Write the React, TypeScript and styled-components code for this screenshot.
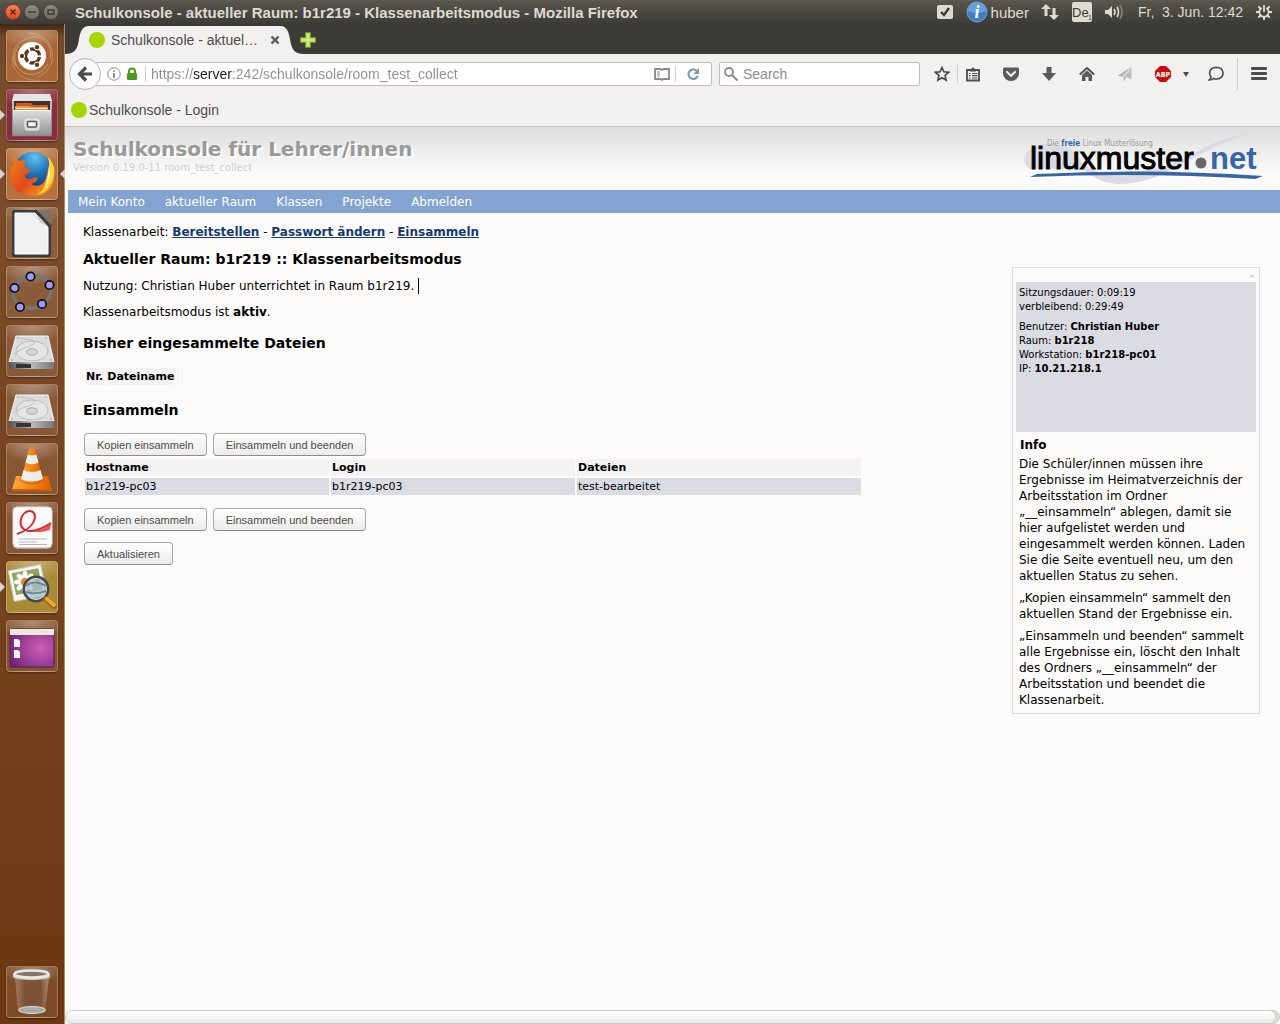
import React from "react";
import styled, { createGlobalStyle } from "styled-components";

const ui = `"Liberation Sans", Arial, sans-serif`;
const web = `"DejaVu Sans", Verdana, sans-serif`;

const Global = createGlobalStyle`
  * { box-sizing: border-box; }
  body { margin: 0; background: #fcfbfa; font-family: ${web}; font-size: 12px; color: #000; }
  h1, h2, p, ul { margin: 0; padding: 0; }
  button, input { font: inherit; }
  svg { display: block; flex: none; }
`;

/* ---------- desktop ---------- */

const Desktop = styled.div`
  min-height: 100vh;
  display: flex;
  flex-direction: column;
`;

const TopPanel = styled.header`
  height: 24px;
  flex: none;
  display: flex;
  align-items: center;
  padding: 0 8px 0 5px;
  background: linear-gradient(#5f5d50, #57544b 2px, #3d3b37);
  color: #dfdbd2;
  font-family: ${ui};
  font-size: 15px;
`;

const WindowButtons = styled.div`
  display: flex;
  gap: 3px;
  width: 70px;
`;

const WindowButton = styled.button<{ $close?: boolean }>`
  width: 16px;
  height: 16px;
  padding: 0;
  display: grid;
  place-items: center;
  border-radius: 50%;
  border: 1px solid ${(p) => (p.$close ? "#9a3b1d" : "#4a4842")};
  background: ${(p) =>
    p.$close ? "linear-gradient(#f5875f, #e2491b)" : "linear-gradient(#8b887e, #6f6c64)"};
`;

const WindowTitle = styled.div`
  flex: 1;
  font-weight: bold;
  white-space: nowrap;
`;

const Indicators = styled.div`
  display: flex;
  align-items: center;
`;

const Indicator = styled.div<{ $gap: number }>`
  display: flex;
  align-items: center;
  gap: 3px;
  margin-left: ${(p) => p.$gap}px;
  white-space: pre;
`;

const Clock = styled(Indicator)`
  font-size: 14px;
`;

const Workspace = styled.div`
  flex: 1;
  display: flex;
`;

const Launcher = styled.nav`
  width: 65px;
  flex: none;
  display: flex;
  flex-direction: column;
  gap: 7px;
  padding: 6px 7px 6px 6px;
  border-right: 1px solid #b08a6c;
  background: linear-gradient(#3c2716, #74492a 12px, #7c4d2b 120px, #774420 50%, #6a3711);
`;

const Tile = styled.button<{ $tint?: string; $last?: boolean }>`
  position: relative;
  width: 52px;
  height: 52px;
  padding: 0;
  margin-top: ${(p) => (p.$last ? "auto" : "0")};
  border: 1px solid rgba(255, 225, 200, 0.3);
  border-radius: 4px;
  display: grid;
  place-items: center;
  background:
    radial-gradient(ellipse 34px 18px at 50% 0, rgba(255, 255, 255, 0.35), transparent),
    ${(p) => p.$tint || "rgba(255, 220, 190, 0.12)"};
  box-shadow: 0 1px 2px rgba(0, 0, 0, 0.4);
`;

const RunningMark = styled.span<{ $right?: boolean }>`
  position: absolute;
  top: 20px;
  ${(p) => (p.$right ? "right: -8px;" : "left: -7px;")}
  border: 5px solid transparent;
  ${(p) =>
    p.$right
      ? "border-left-width: 0; border-right-color: #d8d5d0;"
      : "border-right-width: 0; border-left-color: #d8d5d0;"}
`;

/* ---------- browser ---------- */

const Browser = styled.div`
  flex: 1;
  min-width: 0;
  display: flex;
  flex-direction: column;
`;

const TabStrip = styled.div`
  height: 30px;
  display: flex;
  align-items: flex-end;
  background: #3c3b37;
  font-family: ${ui};
`;

const Tab = styled.div`
  height: 28px;
  width: 191px;
  display: flex;
  align-items: center;
  gap: 6px;
  background: #f2f1f0;
  color: #4c4c4c;
  font-size: 14px;
  white-space: nowrap;
`;

const TabLabel = styled.span`
  flex: 1;
`;

const PlainButton = styled.button`
  padding: 0;
  border: 0;
  background: none;
  display: grid;
  place-items: center;
`;

const NewTab = styled(PlainButton)`
  height: 28px;
  margin-left: -4px;
`;

const Dot = styled.span`
  width: 16px;
  height: 16px;
  flex: none;
  border-radius: 50%;
  background: #a5d400;
`;

const Toolbar = styled.div`
  height: 40px;
  display: flex;
  align-items: center;
  padding: 0 6px 0 4px;
  background: #f2f1f0;
  font-family: ${ui};
  font-size: 14px;
`;

const BackButton = styled(PlainButton)`
  width: 32px;
  height: 32px;
  flex: none;
  border: 1px solid #b8b6b2;
  border-radius: 50%;
  background: #fbfafa;
  z-index: 1;
`;

const Field = styled.div`
  height: 24px;
  display: flex;
  align-items: center;
  gap: 5px;
  border: 1px solid #bfbdb9;
  border-radius: 2px;
  background: #fff;
`;

const AddressField = styled(Field)`
  flex: 1;
  min-width: 0;
  margin-left: -6px;
  margin-right: 7px;
  padding: 0 6px 0 11px;
`;

const SearchField = styled(Field)`
  width: 201px;
  margin-right: 7px;
  padding-left: 4px;
`;

const TextInput = styled.input`
  flex: 1;
  min-width: 0;
  height: 20px;
  padding: 0;
  border: 0;
  outline: 0;
  background: none;
  color: #8c8c8c;
  &::placeholder { color: #8c8c8c; opacity: 1; }
`;

const AddressInput = styled(TextInput)`
  background: linear-gradient(90deg, #8f8f8f 42px, #1c1c1c 42px, #1c1c1c 81px, #8f8f8f 81px);
  background-clip: text;
  -webkit-background-clip: text;
  -webkit-text-fill-color: transparent;
`;

const Divider = styled.span<{ $h: number }>`
  width: 1px;
  height: ${(p) => p.$h}px;
  flex: none;
  background: #cfcdca;
`;

const Tools = styled.div<{ $gap: number }>`
  display: flex;
  align-items: center;
  gap: ${(p) => p.$gap}px;
`;

const ToolButton = styled(PlainButton)<{ $narrow?: boolean }>`
  width: ${(p) => (p.$narrow ? 15 : 30)}px;
  height: 30px;
`;

const BookmarkBar = styled.div`
  height: 33px;
  display: flex;
  align-items: center;
  padding-left: 6px;
  border-bottom: 1px solid #c6c3bf;
  background: #f2f1f0;
`;

const Bookmark = styled.a`
  display: flex;
  align-items: center;
  gap: 2px;
  color: #4c4c4c;
  font-family: ${ui};
  font-size: 14px;
  text-decoration: none;
`;

const ScrollTrack = styled.div`
  height: 14px;
  padding-right: 4px;
  border: 1px solid #cfcbc8;
  border-radius: 7px;
  background: #dddbd8;
`;

const ScrollThumb = styled.div`
  height: 12px;
  border-radius: 6px;
  background: linear-gradient(#fff, #ecebea);
`;

/* ---------- web page ---------- */

const Page = styled.div`
  flex: 1;
  padding-left: 3px;
  background: linear-gradient(#dcdddc, #fcfbfa 46px);
`;

const PageHeader = styled.div`
  height: 63px;
  display: flex;
  justify-content: space-between;
  padding: 10px 17px 0 5px;
`;

const SiteTitle = styled.h1`
  font-size: 20px;
  line-height: 24px;
  color: #999;
  text-shadow: 2px 2px 1px #fff;
`;

const Version = styled.p`
  font-size: 10px;
  line-height: 14px;
  color: #d0d0d0;
`;

const Logo = styled.svg`
  margin-top: -8px;
`;

const Menu = styled.ul`
  height: 23px;
  display: flex;
  align-items: center;
  gap: 20px;
  padding-left: 10px;
  list-style: none;
  background: #83a4d1;
`;

const MenuLink = styled.a`
  color: #fff;
  text-decoration: none;
`;

const Columns = styled.div`
  display: flex;
  justify-content: space-between;
  gap: 24px;
  padding: 0 20px 0 15px;
`;

const Main = styled.main`
  flex: 1;
  max-width: 780px;
  padding-top: 11px;
`;

const Line = styled.p`
  line-height: 16px;
  margin-bottom: 10px;
`;

const Caret = styled.span`
  display: inline-block;
  width: 1px;
  height: 16px;
  margin-left: 4px;
  vertical-align: top;
  background: #000;
`;

const Action = styled.a`
  color: #153a6f;
  font-weight: bold;
`;

const Heading = styled.h2<{ $section?: boolean }>`
  font-size: 14px;
  line-height: 18px;
  margin: ${(p) => (p.$section ? 14 : 10)}px 0;
`;

const Table = styled.table<{ $full?: boolean }>`
  width: ${(p) => (p.$full ? "100%" : "auto")};
  margin-top: ${(p) => (p.$full ? 1 : 0)}px;
  border-spacing: 2px;
  font-size: 11px;
  line-height: 15px;
  text-align: left;
  table-layout: ${(p) => (p.$full ? "fixed" : "auto")};
  th, td { padding: 1px; }
  th { background: #f3f3f3; }
  td { background: #dadbe3; }
`;

const ButtonRow = styled.div`
  display: flex;
  gap: 6px;
  padding-left: 1px;
  margin-top: 11px;
`;

const Button = styled.button`
  height: 23px;
  padding: 0 12px;
  border: 1px solid #a9a7a4;
  border-bottom-color: #8f8d8a;
  border-radius: 4px;
  background: linear-gradient(#fff, #ecebe9);
  color: #4c4c4c;
  font-family: ${ui};
  font-size: 11px;
`;

const Sidebar = styled.aside`
  width: 248px;
  flex: none;
  align-self: flex-start;
  margin-top: 54px;
  padding: 0 3px 5px;
  border: 1px solid #dadbe3;
`;

const Collapse = styled(PlainButton)`
  width: 100%;
  height: 14px;
  padding: 2px 1px 0 0;
  justify-content: end;
`;

const Session = styled.div`
  height: 150px;
  padding: 4px 3px;
  background: #dadbe3;
  font-size: 10px;
  line-height: 14px;
`;

const SessionGroup = styled.div`
  margin-bottom: 6px;
`;

const InfoTitle = styled.h2`
  padding: 5px 4px 3px;
  font-size: 12px;
  line-height: 16px;
`;

const InfoText = styled.p`
  padding: 0 3px;
  margin-bottom: 6px;
  line-height: 16px;
  &:last-child { margin-bottom: 0; }
`;

/* ---------- launcher drawings ---------- */

const I = (p: { children: React.ReactNode }) => (
  <svg width="50" height="50" viewBox="1 1 50 50" aria-hidden="true">{p.children}</svg>
);

const Dash = () => (
  <I>
    <g fill="none" stroke="#e2b992" opacity=".6">
      <path d="M10 36C2 22 12 9 27 7c12-1 20 10 17 22" />
      <path d="M22 3c16 0 27 12 24 28-2 8-8 14-15 16" opacity=".7" />
      <path d="M42 34C36 46 20 48 12 38 7 31 8 22 13 16" />
      <path d="M34 50C18 52 6 42 6 28" opacity=".7" />
    </g>
    <circle cx="26" cy="26" r="14" fill="#fff" />
    <circle cx="26.500" cy="26" r="7" fill="none" stroke="#5a3818" strokeWidth="3.400" strokeDasharray="12.700 2" strokeDashoffset="-1" />
    <g fill="#5a3818" stroke="#fff" strokeWidth="1">
      <circle cx="16" cy="26" r="2.700" /><circle cx="31" cy="17.200" r="2.700" /><circle cx="31" cy="34.800" r="2.700" />
    </g>
  </I>
);

const Files = () => (
  <I>
    <defs><linearGradient id="cab" x1="0" y1="0" x2="0" y2="1"><stop offset="0" stopColor="#dedede" /><stop offset="1" stopColor="#8f8f8f" /></linearGradient></defs>
    <path d="M8 5h36l2 7v33H6V12z" fill="#bdbdbd" />
    <path d="M8 5h36l2 7H6z" fill="#e4e4e4" />
    <path d="M8 12h36v12H8z" fill="#3b3530" />
    <path d="M10 14h15l2 2h15v8H10z" fill="#d9531e" />
    <path d="M9 17h14l2 1h17v5H9z" fill="#f2a13c" />
    <path d="M10 19h31v1H10z" fill="#fff3da" />
    <path d="M6.500 21h39v26h-39z" fill="url(#cab)" stroke="#777" strokeWidth=".6" />
    <path d="M7 21.500h38" stroke="#f5f5f5" />
    <rect x="19" y="30" width="14" height="11" rx="2" fill="#d7d7d7" stroke="#eee" />
    <rect x="21.500" y="32.500" width="9" height="5.500" rx="1" fill="#f5f5f5" stroke="#555" strokeWidth="1.500" />
  </I>
);

const Firefox = () => (
  <I>
    <defs>
      <radialGradient id="globe" cx=".55" cy=".15" r=".9"><stop offset="0" stopColor="#5fc3ee" /><stop offset=".5" stopColor="#1d6fb5" /><stop offset="1" stopColor="#0d2c66" /></radialGradient>
      <linearGradient id="fox" x1="0" y1="0" x2="1" y2=".8"><stop offset="0" stopColor="#f0861d" /><stop offset=".55" stopColor="#e2481b" /><stop offset="1" stopColor="#f6a821" /></linearGradient>
    </defs>
    <circle cx="27" cy="23" r="19" fill="url(#globe)" />
    <path d="M8 8c2 2 3 4 5 5 2-1 5-1 7 0-1 2-2 4-1 6 2 2 5 2 6 3 0 3-5 3-6 6 0 3 3 3 6 3 2-2 5-2 7-1-1 3-4 5-7 6 6 4 13 1 15-6 1-4 1-7 3-11 4 5 5 9 5 13-2 10-10 16-21 16C12 48 4 39 4 28c0-7 2-10 4-13-1-3-1-5 0-7z" fill="url(#fox)" />
    <path d="M42 9c6 6 8 14 5 22-3 8-8 14-16 16 6-4 9-9 9-15 4-8 4-16 2-23z" fill="#fcd535" />
    <path d="M43 17c3 8 1 17-5 23 3-7 4-13 5-23z" fill="#fff3a0" />
  </I>
);

const Writer = () => (
  <I>
    <path d="M6 3h38l2 13-8-8z" fill="#a2785c" opacity=".5" />
    <path d="M8 3h23l14 15v30q0 2-2 2H8q-2 0-2-2V5q0-2 2-2z" fill="#3a3c3c" />
    <path d="M9 6h20l13 14v27H9z" fill="#f0f0f0" stroke="#fff" />
    <path d="M31 3l14 15V3z" fill="#707070" opacity=".7" />
    <path d="M29 6l13 14-8-5z" fill="#ccc" />
  </I>
);

const Geogebra = () => (
  <I>
    <ellipse cx="26" cy="26" rx="19" ry="16" transform="rotate(-15 26 26)" fill="none" stroke="#757575" strokeWidth="3.500" />
    <g fill="#9a9aff" stroke="#111" strokeWidth="1.700">
      <circle cx="24.500" cy="10.500" r="4.200" /><circle cx="43.500" cy="19" r="4.200" /><circle cx="36" cy="38" r="4.200" /><circle cx="14" cy="41" r="4.200" /><circle cx="8.500" cy="22" r="4.200" />
    </g>
  </I>
);

const Disk = () => (
  <I>
    <defs><linearGradient id="front"><stop offset="0" stopColor="#555" /><stop offset=".5" stopColor="#bbb" /><stop offset="1" stopColor="#777" /></linearGradient></defs>
    <path d="M10 11h32l6 26H3z" fill="#dcdcdc" stroke="#f4f4f4" />
    <path d="M3 37h45v5q0 2-2 2H5q-2 0-2-2z" fill="url(#front)" />
    <path d="M10 39h15v4H10z" fill="#333" />
    <ellipse cx="26" cy="26" rx="16" ry="10" fill="#e5e5e5" stroke="#bcbcbc" />
    <path d="M14 13c7 2 12 0 14 4s-14 6-20 12" fill="none" stroke="#bcbcbc" />
    <ellipse cx="26" cy="27" rx="5.500" ry="3.200" fill="#d5d5d5" stroke="#aaa" />
    <g fill="#999"><circle cx="12" cy="13" r=".8" /><circle cx="40" cy="13" r=".8" /><circle cx="6" cy="35" r=".8" /><circle cx="45" cy="35" r=".8" /></g>
  </I>
);

const Vlc = () => (
  <I>
    <defs><linearGradient id="cone"><stop offset="0" stopColor="#ffa63d" /><stop offset=".5" stopColor="#f98414" /><stop offset="1" stopColor="#dd5d00" /></linearGradient></defs>
    <path d="M10 33h32l4 14H6z" fill="url(#cone)" />
    <path d="M6 46h40v2H6z" fill="#d25d05" />
    <path d="M14 38q12 7 24 0l-1-4H15z" fill="#c85400" opacity=".5" />
    <path d="M23.500 5q2.500-2 5 0l8.500 32q-11 6-22 0z" fill="url(#cone)" />
    <path d="M21.800 11.500q4.200 2 8.400 0l2.300 8q-6.500 3.500-13 0zM17.500 27q8.500 4 17 0l2.500 9q-11 5-22 0z" fill="#e9eeee" />
  </I>
);

const Evince = () => (
  <I>
    <rect x="7" y="5" width="39" height="41" rx="4" fill="#fafafa" stroke="#ddd" />
    <path d="M7 42q0 4 4 4h31q4 0 4-4" fill="none" stroke="#aaa" />
    <path d="M11 32c9-3 17-9 18-17 0-6-5-7-9-5-6 4-8 14-1 18 7 3 15 0 26-7" fill="none" stroke="#d9262c" strokeWidth="2" />
    <path d="M22 29c8 1 16-2 23-8l-1 7c-7 2-14 3-22 1z" fill="#e2393d" opacity=".85" />
    <path d="M13 37h28M13 40h18M13 42.500h28" stroke="#b5b5b5" />
  </I>
);

const petals = [0, 45, 90, 135, 180, 225, 270, 315];

const Viewer = () => (
  <I>
    <g transform="rotate(-11 24 22)">
      <rect x="5" y="6" width="33" height="31" rx="1" fill="#f6f6f4" stroke="#ccc" />
      <rect x="8" y="9" width="27" height="22" fill="#8fa45c" />
    </g>
    {petals.map((a) => (
      <ellipse key={a} cx="19" cy="14" rx="2.500" ry="4" fill="#fff" transform={`rotate(${a} 19 21)`} />
    ))}
    <circle cx="19" cy="21" r="4.200" fill="#e58a1f" />
    <circle cx="30" cy="28" r="12" fill="#a9bccb" fillOpacity=".75" stroke="#44494c" strokeWidth="3" />
    <circle cx="30" cy="28" r="10.500" fill="none" stroke="#d6dde0" />
    <path d="M20 25q8-7 20 0M20 31q9 3 20-1" stroke="#70899b" strokeWidth="2" fill="none" />
    <path d="M40 38l8 7" stroke="#9d6610" strokeWidth="6" strokeLinecap="round" />
    <path d="M41 38l7 6" stroke="#eea63a" strokeWidth="4" strokeLinecap="round" />
  </I>
);

const Workspaces = () => (
  <I>
    <defs><radialGradient id="aub" cx=".7" cy=".5" r=".8"><stop offset="0" stopColor="#cf5fb7" /><stop offset="1" stopColor="#702178" /></radialGradient></defs>
    <rect x="4" y="9" width="44" height="38" rx="2" fill="url(#aub)" stroke="#4e2152" />
    <path d="M4 9h44v6H4z" fill="#eceadb" />
    <path d="M8 19h4l2 2v6H8zM8 30h4l2 2v6H8z" fill="#f8f2fa" />
  </I>
);

const Trash = () => (
  <I>
    <defs><linearGradient id="can"><stop offset="0" stopColor="#b08c74" /><stop offset=".3" stopColor="#7b5337" /><stop offset=".75" stopColor="#7a5239" /><stop offset="1" stopColor="#b89c89" /></linearGradient></defs>
    <path d="M9 11h34l-4 34q-13 5-27 0z" fill="url(#can)" opacity=".75" />
    <ellipse cx="26" cy="44" rx="13.500" ry="3.500" fill="#aaa" stroke="#ddd" />
    <path d="M7 8v3c2 4 36 4 37 0V8z" fill="#c9c9c9" />
    <ellipse cx="25.500" cy="8" rx="17" ry="3.500" fill="#8b7565" stroke="#e8e8e8" strokeWidth="2.500" />
  </I>
);

type LauncherApp = { name: string; icon: React.ReactNode; tint?: string; left?: boolean; right?: boolean };
const apps: LauncherApp[] = [
  { name: "Dash", icon: <Dash />, tint: "rgba(200,125,65,.6)" },
  { name: "Dateien", icon: <Files />, tint: "#87303d", left: true },
  { name: "Firefox", icon: <Firefox />, tint: "#b4723f", left: true, right: true },
  { name: "LibreOffice", icon: <Writer /> },
  { name: "GeoGebra", icon: <Geogebra /> },
  { name: "Laufwerk 1", icon: <Disk /> },
  { name: "Laufwerk 2", icon: <Disk /> },
  { name: "VLC", icon: <Vlc /> },
  { name: "Dokumente", icon: <Evince /> },
  { name: "Bildbetrachter", icon: <Viewer />, tint: "#a98b36", left: true },
  { name: "Arbeitsflächen", icon: <Workspaces /> },
];

/* ---------- panel and toolbar drawings ---------- */

const G = (p: { w?: number; h?: number; children: React.ReactNode }) => (
  <svg width={p.w || 16} height={p.h || 16} viewBox={`0 0 ${p.w || 16} ${p.h || 16}`} fill="none" aria-hidden="true">
    {p.children}
  </svg>
);

const c = "#4c4c4c";
const light = "#dfdbd2";

const TabEdge = ({ flip }: { flip?: boolean }) => (
  <svg width="24" height="28" viewBox="0 0 24 28" aria-hidden="true">
    <path transform={flip ? "translate(24 0) scale(-1 1)" : undefined} d="M0 28C9 28 12 24 13.500 16C15 6 17 0 24 0V28z" fill="#f2f1f0" />
  </svg>
);

const LogoDrawing = () => (
  <Logo width="240" height="58" viewBox="0 0 240 58" role="img" aria-label="linuxmuster.net">
    <path d="M239 1C222 4 190 18 165 32C140 46 118 56 95 55C78 54 68 47 60 40L6 40C-2 32 0 22 14 17C25 12 40 14 50 22C58 30 62 46 95 45C130 42 150 36 170 25C195 10 215 5 239 1z" fill="#dadbe3" />
    <text x="24" y="17" fontFamily="DejaVu Sans Condensed, DejaVu Sans, sans-serif" fontSize="8" fill="#999">
      Die <tspan fill="#3465a4" fontWeight="bold">freie</tspan> Linux Musterlösung
    </text>
    <text x="7" y="40" fontFamily="Liberation Sans, Arial, sans-serif" fontSize="32" fill="#000" stroke="#000">linuxmuster</text>
    <circle cx="178" cy="34" r="5.500" fill="#666" />
    <text x="187" y="40" fontFamily="Liberation Sans, Arial, sans-serif" fontSize="31" fontWeight="bold" fill="#3465a4">net</text>
    <path d="M7 48L14 45Q125 39 240 47L232 50Q120 43 7 48z" fill="#3465a4" />
  </Logo>
);

const menu = ["Mein Konto", "aktueller Raum", "Klassen", "Projekte", "Abmelden"];
const teeth = [45, 90, 135, 180, 225, 270, 315];

const CollectButtons = () => (
  <ButtonRow>
    <Button type="button">Kopien einsammeln</Button>
    <Button type="button">Einsammeln und beenden</Button>
  </ButtonRow>
);

export default function App() {
  return (
    <Desktop>
      <Global />
      <TopPanel>
        <WindowButtons>
          <WindowButton $close aria-label="Schließen"><G w={8} h={8}><path d="M1.500 1.500l5 5m0-5l-5 5" stroke="#5b2411" strokeWidth="1.500" /></G></WindowButton>
          <WindowButton aria-label="Minimieren"><G w={8} h={8}><path d="M0 4h8" stroke="#3c3b37" strokeWidth="1.500" /></G></WindowButton>
          <WindowButton aria-label="Maximieren"><G w={8} h={8}><path d="M1 2h6v4H1z" stroke="#3c3b37" strokeWidth="1.300" /></G></WindowButton>
        </WindowButtons>
        <WindowTitle>Schulkonsole - aktueller Raum: b1r219 - Klassenarbeitsmodus - Mozilla Firefox</WindowTitle>
        <Indicators>
          <Indicator $gap={0}><G><rect y="1" width="16" height="14" rx="2" fill={light} /><path d="M4 8l3 3 5-7" stroke="#3c3b37" strokeWidth="2.400" /></G></Indicator>
          <Indicator $gap={13}>
            <G w={22} h={22}><circle cx="11" cy="11" r="10" fill="#3f7fc0" stroke="#6fa5dc" /><path d="M2 10a9 9 0 0 1 18 0q-9 4-18 0z" fill="#699ed5" /><text x="11" y="17" textAnchor="middle" fontFamily="Liberation Serif, serif" fontStyle="italic" fontWeight="bold" fontSize="18" fill="#fff">i</text></G>
            huber
          </Indicator>
          <Indicator $gap={12}><G w={18} h={18}><path d="M5 13V4M13 5v9" stroke={light} strokeWidth="3" /><path d="M0 6l5-5 5 5zM8 12l5 5 5-5z" fill={light} /></G></Indicator>
          <Indicator $gap={13}><G w={20} h={20}><rect width="20" height="20" rx="2" fill={light} /><text x="0" y="15" fontFamily="Liberation Sans, Arial, sans-serif" fontSize="13" fill="#3c3b37">De</text><text x="16" y="18" fontFamily="Liberation Sans, Arial, sans-serif" fontSize="7" fill="#3c3b37">1</text></G></Indicator>
          <Indicator $gap={12}><G w={20}><path d="M1 6h3l4-4v12l-4-4H1z" fill={light} /><path d="M10 5q2 3 0 6M13 3q3 5 0 10" stroke={light} strokeWidth="1.600" /><path d="M16 1q4 7 0 14" stroke="#85827a" strokeWidth="1.600" /></G></Indicator>
          <Clock $gap={14}>{"Fr,  3. Jun. 12:42"}</Clock>
          <Indicator $gap={13}>
            <G>
              <path d="M5.800 4a4.700 4.700 0 1 0 4.400 0M8 1v7" stroke={light} strokeWidth="1.800" />
              {teeth.map((a) => (
                <path key={a} d="M8 0v3" stroke={light} strokeWidth="2" transform={`rotate(${a} 8 8)`} />
              ))}
            </G>
          </Indicator>
        </Indicators>
      </TopPanel>

      <Workspace>
        <Launcher aria-label="Starter">
          {apps.map((a) => (
            <Tile key={a.name} aria-label={a.name} $tint={a.tint}>
              {a.icon}
              {a.left && <RunningMark />}
              {a.right && <RunningMark $right />}
            </Tile>
          ))}
          <Tile aria-label="Papierkorb" $last><Trash /></Tile>
        </Launcher>

        <Browser>
          <TabStrip>
            <TabEdge />
            <Tab>
              <Dot />
              <TabLabel>Schulkonsole - aktuel…</TabLabel>
              <PlainButton aria-label="Tab schließen"><G w={10} h={10}><path d="M1.500 1.500l7 7m0-7l-7 7" stroke="#5c5c5c" strokeWidth="2.400" /></G></PlainButton>
            </Tab>
            <TabEdge flip />
            <NewTab aria-label="Neuer Tab"><G><path d="M5.500 .5h5v5h5v5h-5v5h-5v-5h-5v-5h5z" fill="#b4d65a" stroke="#6b9a1e" /><path d="M8 2v12M2 8h12" stroke="#d3ea8c" strokeWidth="2" /></G></NewTab>
          </TabStrip>

          <Toolbar>
            <BackButton aria-label="Zurück"><G><path d="M9 1.500L2.500 8L9 14.500M3 8h12" stroke={c} strokeWidth="3.200" /></G></BackButton>
            <AddressField>
              <G w={14} h={14}><circle cx="7" cy="7" r="6.200" stroke="#8a8a8a" /><path d="M7 6v5M7 3.200v1.600" stroke="#777" strokeWidth="1.600" /></G>
              <G w={14} h={14}><rect x="1" y="6" width="10" height="7" rx="1" fill="#4b9a1f" /><path d="M3 7V4.500a3 3 0 0 1 6 0V7" stroke="#4b9a1f" strokeWidth="2" /></G>
              <Divider $h={16} />
              <AddressInput aria-label="Adresse" defaultValue="https://server:242/schulkonsole/room_test_collect" />
              <G><path d="M1 3h5.500L8 4l1.500-1H15v10H9.500L8 14l-1.500-1H1z" stroke="#8a8a8a" strokeWidth="1.800" /><path d="M3 6h3M3 8h3M3 10h3" stroke="#8a8a8a" /></G>
              <Divider $h={16} />
              <G w={24}><path d="M15.500 4.500a4.800 4.800 0 1 0 1.200 5.500" stroke="#8b99a8" strokeWidth="2.200" /><path d="M18 2v6h-6z" fill="#8b99a8" /></G>
            </AddressField>
            <SearchField>
              <G w={14} h={14}><circle cx="5" cy="5" r="4" stroke="#8a8a8a" strokeWidth="1.800" /><path d="M8 8l5.500 5.500" stroke="#8a8a8a" strokeWidth="2.200" /></G>
              <TextInput aria-label="Suche" placeholder="Search" />
            </SearchField>
            <Tools $gap={8}>
              <Tools $gap={0}>
                <ToolButton aria-label="Lesezeichen setzen"><G><path d="M8 1.500l1.900 4.300 4.700.5-3.500 3.100 1 4.700L8 11.700l-4.100 2.400 1-4.700L1.400 6.300l4.700-.5z" stroke={c} strokeWidth="1.700" /></G></ToolButton>
                <Divider $h={18} />
                <ToolButton aria-label="Lesezeichen"><G><path d="M2 4h12v10.500H2z" stroke={c} strokeWidth="1.800" /><path d="M5 3h1.500a1.500 1.500 0 0 1 3 0H11v2.500H5z" fill={c} /><path d="M4 7.500h1.500M7 7.500h5.500M4 9.700h1.500M7 9.700h5.500M4 12h1.500M7 12h5.500" stroke={c} strokeWidth="1.200" /></G></ToolButton>
              </Tools>
              <ToolButton aria-label="Pocket"><G><path d="M1.500 1.500h13q1.500 0 1.500 1.500v4.500a8 7.500 0 0 1-16 0V3q0-1.500 1.500-1.500z" fill="#5a5a5a" /><path d="M4 6l4 3.700L12 6" stroke="#f2f1f0" strokeWidth="2.200" strokeLinecap="round" /></G></ToolButton>
              <ToolButton aria-label="Downloads"><G><path d="M5.500 1h5v6H15l-7 8-7-8h4.500z" fill="#5a5a5a" /></G></ToolButton>
              <ToolButton aria-label="Startseite"><G><path d="M.8 8.500L8 2l7.200 6.500" stroke={c} strokeWidth="1.800" /><path d="M3 9l5-4.500L13 9v6H9.500v-4h-3v4H3z" fill="#5a5a5a" /></G></ToolButton>
              <ToolButton aria-label="Seite teilen"><G><path d="M14.500 1v12.500L9.500 11 7 15.500 6 10z" fill="#bdbdbd" /><path d="M14 1L1 9.500l4 1.500z" fill="#b3b3b3" /><path d="M13.500 3L6.500 10.500" stroke="#f2f1f0" /></G></ToolButton>
              <Tools $gap={0}>
                <ToolButton aria-label="Adblock Plus"><G><path d="M5 0h6l5 5v6l-5 5H5l-5-5V5z" fill="#c80d0d" /><text x="8" y="11" textAnchor="middle" fontFamily="DejaVu Sans Condensed, DejaVu Sans, sans-serif" fontWeight="bold" fontSize="7" fill="#fff">ABP</text></G></ToolButton>
                <ToolButton $narrow aria-label="Adblock-Menü"><G w={6} h={5}><path d="M0 0h6L3 5z" fill={c} /></G></ToolButton>
              </Tools>
              <Tools $gap={6}>
                <ToolButton aria-label="Chat"><G><path d="M8.300 1.300c4 0 6.700 2.500 6.700 5.800s-2.700 5.900-6.700 5.900c-1 0-2-.1-2.800-.5-1 1-2.500 1.500-4.200 1.500 1-.9 1.600-1.900 1.700-3.200C2 9.800 1.600 8.600 1.600 7.100c0-3.300 2.700-5.800 6.700-5.800z" stroke={c} strokeWidth="1.700" /></G></ToolButton>
                <Divider $h={32} />
                <ToolButton aria-label="Menü öffnen"><G><path d="M1 2.500h14M1 7.500h14M1 12.500h14" stroke={c} strokeWidth="2.800" strokeLinecap="round" /></G></ToolButton>
              </Tools>
            </Tools>
          </Toolbar>

          <BookmarkBar>
            <Bookmark href="#login"><Dot />Schulkonsole - Login</Bookmark>
          </BookmarkBar>

          <Page>
            <PageHeader>
              <div>
                <SiteTitle>Schulkonsole für Lehrer/innen</SiteTitle>
                <Version>Version 0.19.0-11 room_test_collect</Version>
              </div>
              <LogoDrawing />
            </PageHeader>
            <Menu>
              {menu.map((m) => (
                <li key={m}><MenuLink href="#menu">{m}</MenuLink></li>
              ))}
            </Menu>
            <Columns>
              <Main>
                <Line>
                  Klassenarbeit: <Action href="#bereitstellen">Bereitstellen</Action> - <Action href="#passwort">Passwort ändern</Action> - <Action href="#einsammeln">Einsammeln</Action>
                </Line>
                <Heading>Aktueller Raum: b1r219 :: Klassenarbeitsmodus</Heading>
                <Line>Nutzung: Christian Huber unterrichtet in Raum b1r219.<Caret /></Line>
                <Line>Klassenarbeitsmodus ist <b>aktiv</b>.</Line>
                <Heading $section>Bisher eingesammelte Dateien</Heading>
                <Table>
                  <thead><tr><th>Nr.</th><th>Dateiname</th><th /><th /></tr></thead>
                </Table>
                <Heading $section>Einsammeln</Heading>
                <CollectButtons />
                <Table $full>
                  <colgroup><col width="244" /><col width="244" /><col /></colgroup>
                  <thead><tr><th>Hostname</th><th>Login</th><th>Dateien</th></tr></thead>
                  <tbody><tr><td>b1r219-pc03</td><td>b1r219-pc03</td><td>test-bearbeitet</td></tr></tbody>
                </Table>
                <CollectButtons />
                <ButtonRow><Button type="button">Aktualisieren</Button></ButtonRow>
              </Main>
              <Sidebar>
                <Collapse aria-label="Einklappen"><G w={6} h={4}><path d="M1 3.500L3 1l2 2.500" stroke="#b5b5b5" /></G></Collapse>
                <Session>
                  <SessionGroup>Sitzungsdauer: 0:09:19<br />verbleibend: 0:29:49</SessionGroup>
                  <SessionGroup>
                    Benutzer: <b>Christian Huber</b><br />
                    Raum: <b>b1r218</b><br />
                    Workstation: <b>b1r218-pc01</b><br />
                    IP: <b>10.21.218.1</b>
                  </SessionGroup>
                </Session>
                <InfoTitle>Info</InfoTitle>
                <InfoText>Die Schüler/innen müssen ihre Ergebnisse im Heimatverzeichnis der Arbeitsstation im Ordner „__einsammeln“ ablegen, damit sie hier aufgelistet werden und eingesammelt werden können. Laden Sie die Seite eventuell neu, um den aktuellen Status zu sehen.</InfoText>
                <InfoText>„Kopien einsammeln“ sammelt den aktuellen Stand der Ergebnisse ein.</InfoText>
                <InfoText>„Einsammeln und beenden“ sammelt alle Ergebnisse ein, löscht den Inhalt des Ordners „__einsammeln“ der Arbeitsstation und beendet die Klassenarbeit.</InfoText>
              </Sidebar>
            </Columns>
          </Page>
          <ScrollTrack><ScrollThumb /></ScrollTrack>
        </Browser>
      </Workspace>
    </Desktop>
  );
}
